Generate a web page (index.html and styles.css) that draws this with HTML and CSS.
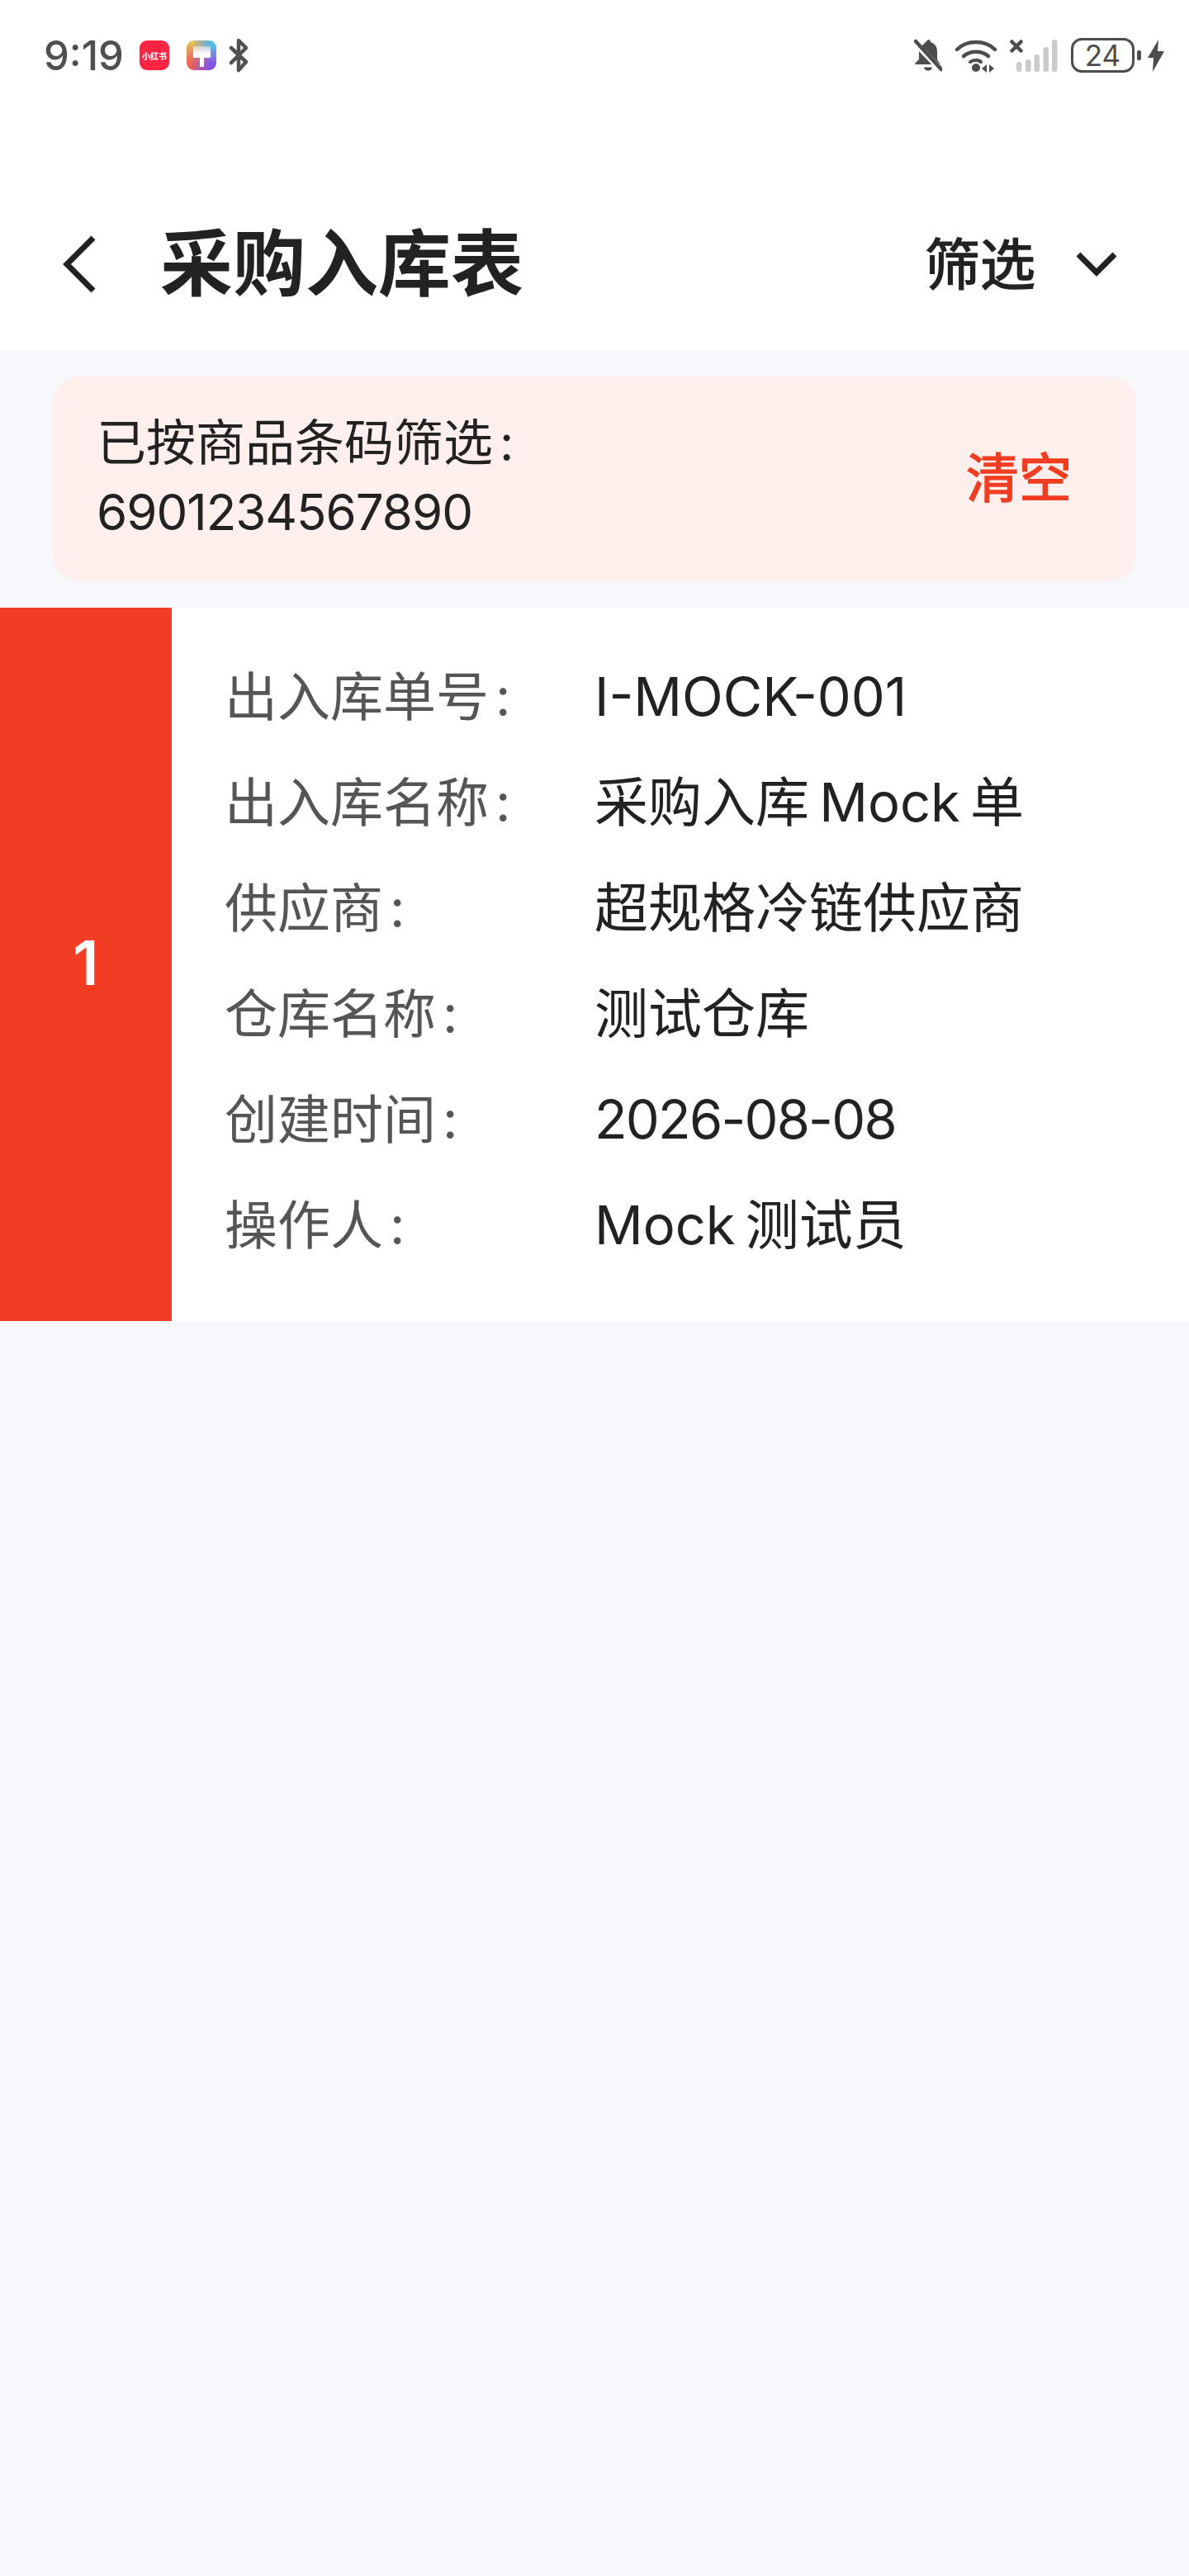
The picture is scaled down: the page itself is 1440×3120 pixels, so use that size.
FILE: index.html
```html
<!DOCTYPE html>
<html lang="zh-CN">
<head>
  <meta charset="UTF-8">
  <title>采购入库表</title>
  <link rel="stylesheet" href="styles.css">
</head>
<body>
  <div class="status-bar">
    <span class="time">9:19</span>
    <span class="app-icon red-icon">小红书</span>
    <svg class="app-icon brush-icon" width="36" height="36" viewBox="0 0 36 36">
      <defs>
        <linearGradient id="brushHead" x1="0" y1="0" x2="0" y2="1">
          <stop offset="0" stop-color="#fff" stop-opacity="0.45"/>
          <stop offset="1" stop-color="#fff"/>
        </linearGradient>
      </defs>
      <rect x="8" y="7" width="21" height="9" fill="url(#brushHead)"/>
      <path d="M8 16h21v3.500a1.500 1.500 0 0 1-1.500 1.500H9.500a1.500 1.500 0 0 1-1.500-1.500z" fill="#fff"/>
      <rect x="16" y="21" width="5" height="11" fill="#fff"/>
    </svg>
    <svg class="bt-icon" width="24" height="42" viewBox="0 0 24 42" fill="none" stroke="#505050" stroke-width="4.500" stroke-linecap="round" stroke-linejoin="round">
      <path d="M3 12l18 17-9 10V3l9 9L3 30"/>
    </svg>
    <div class="status-right">
      <svg width="34" height="42" viewBox="0 0 34 42">
        <path d="M17 2a3 3 0 0 1 3 3c5 1.500 8 5.500 8 11v10l4 6H2.500c-1 0-1.500-1-.9-1.800L6 26V13z" fill="#4d4d4d"/>
        <path d="M12 35.500h10a5 4 0 0 1-10 0z" fill="#4d4d4d"/>
        <path d="M1 6l32 33" stroke="#fff" stroke-width="7"/>
        <path d="M2 4l31 34" stroke="#4d4d4d" stroke-width="4.500" stroke-linecap="round"/>
      </svg>
      <svg width="50" height="42" viewBox="0 0 50 42" fill="none" stroke="#4d4d4d" stroke-width="4.500" stroke-linecap="round">
        <path d="M2 14C14 2 36 2 48 14"/>
        <path d="M10 22c8-7 22-7 30 0"/>
        <path d="M18 29c4-3 10-3 13 0" stroke-width="4"/>
        <circle cx="25" cy="36" r="5" fill="#4d4d4d" stroke="none"/>
        <path d="M32 37l6-5v10zM41 32l6 5-6 5z" fill="#4d4d4d" stroke="none"/>
      </svg>
      <svg width="58" height="42" viewBox="0 0 58 42">
        <g fill="#cbcbcb">
          <rect x="8" y="29" width="6.500" height="12" rx="3.200"/>
          <rect x="19" y="26" width="6.500" height="15" rx="3.200"/>
          <rect x="29.500" y="20" width="6.500" height="21" rx="3.200"/>
          <rect x="40.500" y="11" width="6.500" height="30" rx="3.200"/>
          <rect x="51" y="2" width="6.500" height="39" rx="3.200"/>
        </g>
        <path d="M2.500 4.500l11 11M13.500 4.500l-11 11" stroke="#4d4d4d" stroke-width="4.500" stroke-linecap="round"/>
      </svg>
      <div class="battery">
        <span class="battery-box">24</span>
        <span class="battery-nub"></span>
      </div>
      <svg class="bolt" width="20" height="42" viewBox="0 0 20 42">
        <path d="M13 2L0 24h7l-1 17 14-25h-8z" fill="#4d4d4d"/>
      </svg>
    </div>
  </div>

  <div class="nav-bar">
    <div class="nav-left">
      <svg class="back" width="40" height="68" viewBox="0 0 40 68" fill="none" stroke="#222" stroke-width="7">
        <path d="M37 2L5 34l32 32"/>
      </svg>
      <h1 class="page-title">采购入库表</h1>
    </div>
    <div class="filter-btn">
      <span class="filter-label">筛选</span>
      <svg class="filter-arrow" width="48" height="30" viewBox="0 0 48 30" fill="none" stroke="#222" stroke-width="7">
        <path d="M2 3l22 22L46 3"/>
      </svg>
    </div>
  </div>

  <div class="filter-banner">
    <div class="filter-text">
      <div>已按商品条码筛选<span class="colon">:</span></div>
      <div class="filter-code">6901234567890</div>
    </div>
    <span class="clear-btn">清空</span>
  </div>

  <div class="record">
    <div class="record-index">1</div>
    <div class="record-rows">
      <div class="row"><span class="row-label">出入库单号<span class="colon">:</span></span><span class="row-value">I-MOCK-001</span></div>
      <div class="row"><span class="row-label">出入库名称<span class="colon">:</span></span><span class="row-value">采购入库 Mock 单</span></div>
      <div class="row"><span class="row-label">供应商<span class="colon">:</span></span><span class="row-value">超规格冷链供应商</span></div>
      <div class="row"><span class="row-label">仓库名称<span class="colon">:</span></span><span class="row-value">测试仓库</span></div>
      <div class="row"><span class="row-label">创建时间<span class="colon">:</span></span><span class="row-value date">2026-08-08</span></div>
      <div class="row"><span class="row-label">操作人<span class="colon">:</span></span><span class="row-value">Mock 测试员</span></div>
    </div>
  </div>
</body>
</html>
```

FILE: styles.css
```css
body {
  margin: 0;
  min-height: 3120px;
  background: #f7f8fa;
  color: #222;
  font-family: Inter, "Noto Sans CJK SC", sans-serif;
}
.status-bar {
  display: flex;
  align-items: center;
  height: 134px;
  padding: 0 30px 0 53px;
  background: #fff;
  box-sizing: border-box;
}
.time {
  width: 94px;
  margin-right: 22px;
  font-size: 49px;
  font-weight: 500;
  color: #4f4f4f;
  white-space: nowrap;
}
.app-icon {
  width: 36px;
  height: 36px;
  border-radius: 9px;
  flex: none;
}
.red-icon {
  display: flex;
  align-items: center;
  justify-content: center;
  margin-right: 21px;
  background: #ff2442;
  color: #fff;
  font-size: 10px;
  font-weight: 700;
  white-space: nowrap;
}
.brush-icon {
  margin-right: 15px;
  background:
    radial-gradient(circle at 100% 0, #27d4f5 0, transparent 55%),
    radial-gradient(circle at 100% 100%, #6a4cf5 0, transparent 65%),
    radial-gradient(circle at 0 100%, #ff5a2c 0, transparent 65%),
    radial-gradient(circle at 0 0, #e8d73c 0, transparent 70%),
    #c56ac0;
}
.status-right {
  display: flex;
  align-items: center;
  gap: 16px;
  margin-left: auto;
}
.battery {
  display: flex;
  align-items: center;
  gap: 3px;
}
.battery-box {
  display: flex;
  align-items: center;
  justify-content: center;
  width: 77px;
  height: 42px;
  border: 3px solid #4d4d4d;
  border-radius: 13px;
  box-sizing: border-box;
  font-size: 35px;
  color: #4d4d4d;
}
.battery-nub {
  width: 5px;
  height: 12px;
  border-radius: 2px;
  background: #4d4d4d;
}
.bolt {
  margin-left: -8px;
}
.nav-bar {
  display: flex;
  align-items: center;
  justify-content: space-between;
  height: 290px;
  padding: 76px 88px 0 76px;
  background: #fff;
  box-sizing: border-box;
}
.nav-left {
  display: flex;
  align-items: center;
}
.back {
  margin: 6px 78px 0 0;
}
.page-title {
  margin: 0 0 10px;
  font-size: 88px;
  font-weight: 700;
}
.filter-btn {
  display: flex;
  align-items: center;
  gap: 50px;
}
.filter-label {
  margin-bottom: 4px;
  font-size: 67px;
  -webkit-text-stroke: 1.5px #222;
}
.filter-arrow {
  margin-top: 6px;
}
.colon {
  margin-left: 8px;
}
.filter-banner {
  display: flex;
  align-items: center;
  justify-content: space-between;
  margin: 32px 64px;
  padding: 38px 78px 42px 53px;
  border-radius: 32px;
  background: #fff0ee;
}
.filter-text {
  font-size: 60px;
  line-height: 84px;
}
.filter-code {
  letter-spacing: -1px;
}
.clear-btn {
  margin-bottom: 8px;
  font-size: 64px;
  color: #f13d22;
  -webkit-text-stroke: 1.5px #f13d22;
}
.record {
  display: flex;
  background: #fff;
}
.record-index {
  display: flex;
  align-items: center;
  justify-content: center;
  width: 208px;
  padding-bottom: 4px;
  background: #f13d22;
  color: #fff;
  font-size: 74px;
  font-weight: 600;
  box-sizing: border-box;
}
.record-rows {
  padding: 44px 0 52px 64px;
}
.row {
  display: flex;
  font-size: 64px;
  line-height: 128px;
}
.row-label {
  width: 448px;
  color: #555;
}
.row-value {
  font-size: 65px;
  word-spacing: -6px;
}
.date {
  letter-spacing: -1.8px;
}
```
